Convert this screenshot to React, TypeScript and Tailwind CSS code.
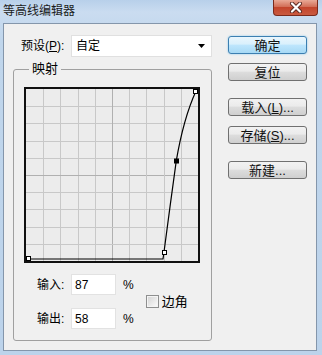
import React from "react";

const Btn = ({ children, primary = false, className = "" }: { children: React.ReactNode; primary?: boolean; className?: string }) => (
  <div
    className={
      "w-[79px] h-[18px] rounded-[3px] border flex items-center justify-center text-[13px] leading-[13px] text-[#111] " +
      (primary
        ? "border-[#3c7fb1] bg-[linear-gradient(#eaf6fd,#d9f0fc_45%,#bee6fd_50%,#a7d9f5)] shadow-[0_0_2px_#7fc4ee] "
        : "border-[#707070] bg-[linear-gradient(#f2f2f2,#ebebeb_45%,#dddddd_50%,#cfcfcf)] ") +
      className
    }
  >
    {children}
  </div>
);

const Graph = () => {
  const step = 172 / 10;
  const lines = [1, 2, 3, 4, 5, 6, 7, 8, 9];
  return (
    <div className="w-[176px] h-[176px] border-2 border-[#111] bg-[#ececec]">
      <svg width="172" height="172" viewBox="0 0 172 172">
        {lines.map((i) => (
          <g key={i} stroke={i === 5 ? "#b0b0b0" : "#c8c8c8"} strokeWidth="1">
            <line x1={Math.round(i * step) + 0.5} y1="0" x2={Math.round(i * step) + 0.5} y2="172" />
            <line x1="0" y1={Math.round(i * step) + 0.5} x2="172" y2={Math.round(i * step) + 0.5} />
          </g>
        ))}
        <path
          d="M2,170 L137,170 L138,163 C141,140 147,95 150.3,71.7 C154,50 160,24 170,2"
          fill="none"
          stroke="#000"
          strokeWidth="1.2"
        />
        <rect x="0.5" y="167.5" width="4" height="4" fill="#fff" stroke="#000" />
        <rect x="136.5" y="161.5" width="4" height="4" fill="#fff" stroke="#000" />
        <rect x="148" y="69.5" width="5" height="5" fill="#000" />
        <rect x="167.5" y="0.5" width="4" height="4" fill="#fff" stroke="#000" />
      </svg>
    </div>
  );
};

const Field = ({ label, value }: { label: string; value: string }) => (
  <div className="flex items-center h-[21px]">
    <span className="w-[34px]">{label}</span>
    <div className="w-[45px] h-[21px] bg-white border border-[#e2e2e2] pl-[3px] flex items-center text-[12px]">{value}</div>
    <span className="ml-[7px]">%</span>
  </div>
);

export default function App() {
  return (
    <div className="w-[322px] h-[355px] flex flex-col overflow-hidden bg-[linear-gradient(180deg,#b8d0ea,#cadcf0_12px,#c0d6ec_40px,#bcd3eb)] font-['Liberation_Sans','Noto_Sans_CJK_SC',sans-serif] text-[12px] text-black">
      {/* title bar */}
      <div className="h-[23px] flex items-start justify-between">
        <span className="pl-[3px] pt-[4px] leading-[14px] text-[12px] text-[#1b1b1b]">等高线编辑器</span>
        <div className="mr-[4px] w-[45px] h-[16px] rounded-b-[4px] border border-t-0 border-[#7a2a1c] bg-[linear-gradient(#e9a996,#d26e57_45%,#c3452c_50%,#c95a40)] flex items-center justify-center">
          <svg width="14" height="11" viewBox="0 0 14 11">
            <path d="M3,1.5 L11,9.5 M11,1.5 L3,9.5" stroke="#5a2a22" strokeWidth="4" strokeLinecap="round" />
            <path d="M3,1.5 L11,9.5 M11,1.5 L3,9.5" stroke="#fff" strokeWidth="2.2" strokeLinecap="round" />
          </svg>
        </div>
      </div>

      {/* client area */}
      <div className="flex-1 ml-[3px] mr-[5px] mb-[4px] border border-[#8496ab] bg-[#f0f0f0] flex">
        <div className="w-[212px] pl-[9px] pt-[11px]">
          <div className="flex items-center h-[22px] ml-[8px]">
            <span className="w-[50px]">
              预设(<span className="underline">P</span>):
            </span>
            <div className="w-[141px] h-[22px] bg-white border border-[#e0e0e0] flex items-center justify-between pl-[4px] pr-[6px]">
              <span>自定</span>
              <svg width="7" height="4" viewBox="0 0 7 4">
                <path d="M0,0 L7,0 L3.5,4 Z" fill="#000" />
              </svg>
            </div>
          </div>

          <fieldset className="mt-[4px] w-[199px] h-[280px] border border-[#a0a0a0] rounded-[3px]">
            <legend className="ml-[15px] px-[3px] leading-[16px] text-[13px]">映射</legend>
            <div className="mt-[10px] ml-[10px]">
              <Graph />
            </div>
            <div className="mt-[11px] ml-[23px] flex items-center">
              <div className="flex flex-col gap-[13px]">
                <Field label="输入:" value="87" />
                <Field label="输出:" value="58" />
              </div>
              <div className="ml-[12px] flex items-center gap-[3px]">
                <div className="w-[13px] h-[13px] border border-[#8e8f8f] bg-[#f4f4f4] p-[1px]">
                  <div className="w-full h-full bg-[linear-gradient(135deg,#d6d6d6,#f9f9f9)]" />
                </div>
                <span className="text-[13px]">边角</span>
              </div>
            </div>
          </fieldset>
        </div>

        <div className="ml-[12px] pt-[12px] flex flex-col">
          <Btn primary>确定</Btn>
          <Btn className="mt-[9px]">复位</Btn>
          <Btn className="mt-[17px]">
            载入(<span className="underline">L</span>)...
          </Btn>
          <Btn className="mt-[10px]">
            存储(<span className="underline">S</span>)...
          </Btn>
          <Btn className="mt-[17px]">新建...</Btn>
        </div>
      </div>
    </div>
  );
}
